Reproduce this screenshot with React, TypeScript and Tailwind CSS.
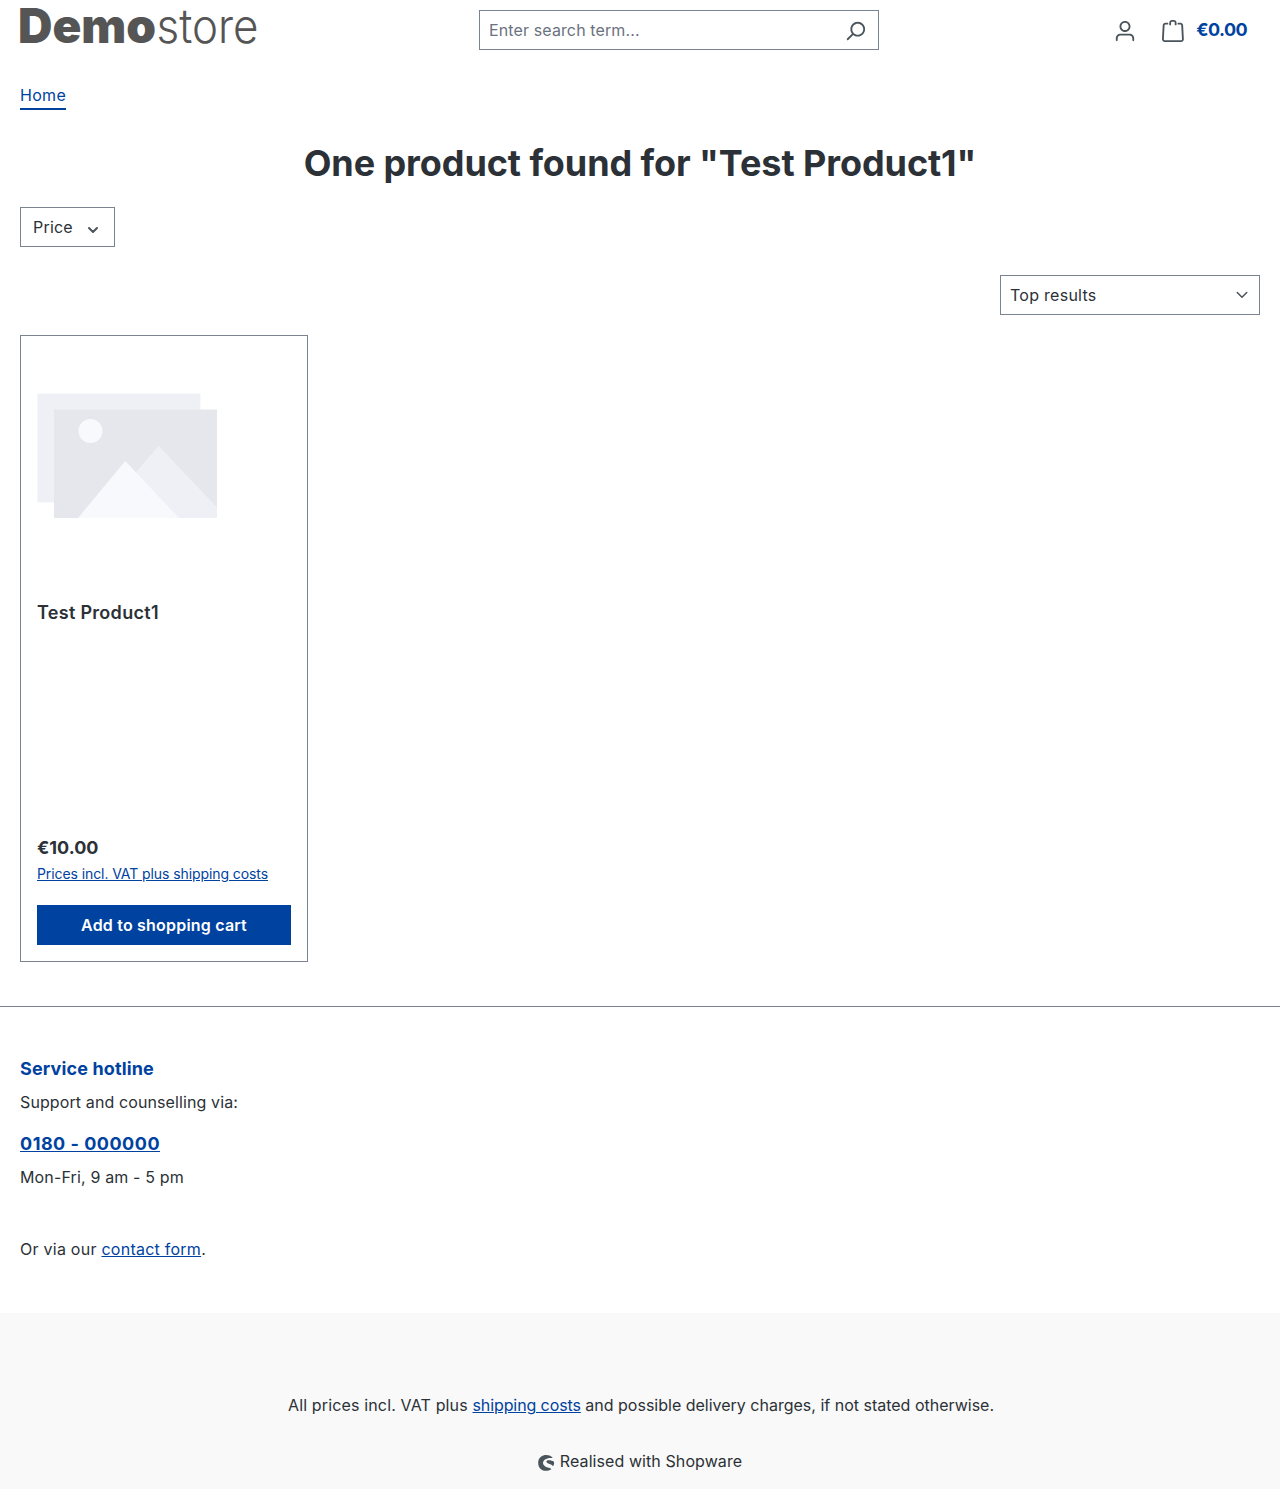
import React from "react";

const iconClass = "shrink-0 fill-[#4a545b]";

function SearchIcon() {
  return (
    <svg viewBox="0 0 24 24" className={`mt-px h-[22px] w-[22px] ${iconClass}`}>
      <path d="M10.0944 16.3199 4.707 21.707c-.3905.3905-1.0237.3905-1.4142 0-.3905-.3905-.3905-1.0237 0-1.4142L8.68 14.9056C7.6271 13.551 7 11.8487 7 10c0-4.4183 3.5817-8 8-8s8 3.5817 8 8-3.5817 8-8 8c-1.8487 0-3.551-.627-4.9056-1.6801zM15 16c3.3137 0 6-2.6863 6-6s-2.6863-6-6-6-6 2.6863-6 6 2.6863 6 6 6z" />
    </svg>
  );
}

function AvatarIcon() {
  return (
    <svg viewBox="0 0 24 24" className={`h-[22px] w-[22px] ${iconClass}`}>
      <path d="M12 3C9.7909 3 8 4.7909 8 7c0 2.2091 1.7909 4 4 4 2.2091 0 4-1.7909 4-4 0-2.2091-1.7909-4-4-4zm0-2c3.3137 0 6 2.6863 6 6s-2.6863 6-6 6-6-2.6863-6-6 2.6863-6 6-6zM4 22.099c0 .5523-.4477 1-1 1s-1-.4477-1-1V20c0-2.7614 2.2386-5 5-5h10.0007c2.7614 0 5 2.2386 5 5v2.099c0 .5523-.4477 1-1 1s-1-.4477-1-1V20c0-1.6569-1.3431-3-3-3H7c-1.6569 0-3 1.3431-3 3v2.099z" />
    </svg>
  );
}

function BagIcon() {
  return (
    <svg viewBox="0 0 24 24" className={`h-[22px] w-[22px] ${iconClass}`}>
      <path d="M5.892 3c.5523 0 1 .4477 1 1s-.4477 1-1 1H3.7895a1 1 0 0 0-.9986.9475l-.7895 15c-.029.5515.3946 1.0221.9987 1.0525h17.8102c.5523 0 1-.4477.9986-1.0525l-.7895-15A1 1 0 0 0 20.0208 5H17.892c-.5523 0-1-.4477-1-1s.4477-1 1-1h2.1288c1.5956 0 2.912 1.249 2.9959 2.8423l.7894 15c.0035.0788.0035.0788.0042.1577 0 1.6569-1.3432 3-3 3H3c-.079-.0007-.079-.0007-.1577-.0041-1.6546-.0871-2.9253-1.499-2.8382-3.1536l.7895-15C.8775 4.249 2.1939 3 3.7895 3H5.892zm4 2c0 .5523-.4477 1-1 1s-1-.4477-1-1V3c0-1.6569 1.3432-3 3-3h2c1.6569 0 3 1.3431 3 3v2c0 .5523-.4477 1-1 1s-1-.4477-1-1V3c0-.5523-.4477-1-1-1h-2c-.5523 0-1 .4477-1 1v2z" />
    </svg>
  );
}

function Logo() {
  return (
    <svg viewBox="0 0 240 40" className="h-10 w-60 overflow-visible fill-[#555555]" fontFamily="Inter, sans-serif" fontSize="47.5">
      <text x="-2" y="34.700" fontWeight="900" textLength="138" lengthAdjust="spacingAndGlyphs">Demo</text>
      <text x="136.500" y="34.700" fontWeight="300" textLength="102" lengthAdjust="spacingAndGlyphs">store</text>
    </svg>
  );
}

function PlaceholderImage() {
  return (
    <svg viewBox="0 0 180 126" className="mt-[41px] h-[126px] w-[180px]">
      <path fill="#eff0f6" d="M.4.7h163v108.500H.4z" />
      <path fill="#e6e7ec" d="M17 16.500h163V125H17z" />
      <path fill="#eff0f6" d="m99 79 22.700-26.300L180 114.500V125H90z" />
      <path fill="#f8f9fd" d="m88.300 68 53.700 57H41z" />
      <circle cx="53.500" cy="38" r="12" fill="#f8f9fd" />
    </svg>
  );
}

export default function App() {
  return (
    <div className="h-[1489px] bg-white font-[Inter,sans-serif] text-base leading-6 text-[#2b3136]">
      <header className="flex h-[60px] items-start px-5">
        <div className="mt-2 w-[459px]"><Logo /></div>
        <div className="mt-2.5 flex h-10 w-[400px] items-center border border-[#798490] pl-[9px] pr-3">
          <span className="flex-1 tracking-[0.12px] text-[#6b7280]">Enter search term...</span>
          <SearchIcon />
        </div>
        <div className="ml-auto mr-[13px] mt-5 flex h-[22px] items-center">
          <AvatarIcon />
          <span className="ml-[26px] flex"><BagIcon /></span>
          <span className="-mt-0.5 ml-3 text-lg font-bold leading-5 tracking-[-0.6px] text-[#0042a0]">€0.00</span>
        </div>
      </header>

      <nav className="mt-6 flex h-[26px] px-5">
        <a className="h-[26px] border-b-2 border-[#0042a0] leading-[23px] tracking-[0.3px] text-[#0042a0]">Home</a>
      </nav>

      <main className="px-5">
        <h1 className="mt-8 text-center text-4xl font-bold leading-[43px] tracking-[-0.08px]">One product found for "Test Product1"</h1>
        <div className="mt-[22px] flex h-10 w-[95px] items-center justify-between border border-[#798490] pl-3 pr-[15px]">
          <span className="tracking-[0.2px]">Price</span>
          <svg viewBox="0 0 12 8" className="mt-[5px] h-2 w-3 fill-none stroke-[#4a545b]">
            <path d="m2 2 4 4 4-4" strokeWidth="2" strokeLinecap="round" strokeLinejoin="round" />
          </svg>
        </div>
        <div className="ml-auto mt-7 flex h-10 w-[260px] items-center justify-between border border-[#798490] pl-[9px] pr-[11px]">
          <span className="tracking-[0.27px]">Top results</span>
          <svg viewBox="0 0 12 8" className="h-2 w-3 fill-none stroke-[#4a545b]">
            <path d="m1.250 1.500 4.750 4.750 4.750-4.750" strokeWidth="1.500" strokeLinecap="round" strokeLinejoin="round" />
          </svg>
        </div>

        <article className="mt-5 flex h-[627px] w-72 flex-col border border-[#798490] p-4">
          <PlaceholderImage />
          <h2 className="mt-[82px] text-lg font-semibold leading-6 tracking-[0.3px]">Test Product1</h2>
          <p className="mt-auto text-lg font-bold leading-6">€10.00</p>
          <a className="mt-1 self-start text-sm leading-5 tracking-[-0.085px] text-[#0042a0] underline">Prices incl. VAT plus shipping costs</a>
          <button className="mt-[21px] h-10 w-full bg-[#0042a0] font-semibold tracking-[0.2px] text-white">Add to shopping cart</button>
        </article>
      </main>

      <footer className="mt-11 border-t border-[#798490]">
        <section className="h-[306px] px-5 pt-[50px]">
          <h3 className="text-lg font-bold leading-6 tracking-[0.13px] text-[#0042a0]">Service hotline</h3>
          <p className="mt-[9px] tracking-[0.11px]">Support and counselling via:</p>
          <a className="mt-[18px] block text-lg font-bold leading-6 tracking-[0.5px] text-[#0042a0] underline">0180 - 000000</a>
          <p className="mt-[9px] tracking-[0.15px]">Mon-Fri, 9 am - 5 pm</p>
          <p className="mt-12 tracking-[0.25px]">Or via our <a className="text-[#0042a0] underline">contact form</a>.</p>
        </section>
        <section className="h-[176px] bg-[#f9f9f9] pt-20 text-center">
          <p className="pl-0.5">
            <span className="tracking-[0.15px]">All prices incl. VAT plus </span>
            <a className="tracking-[-0.1px] text-[#0042a0] underline">shipping costs</a> and possible delivery charges, if not stated otherwise.
          </p>
          <div className="mt-8 flex justify-center gap-[5px]">
            <svg viewBox="0 0 18 18" className="mt-[5px] h-[18px] w-[17px] fill-[#4a545b]">
              <path d="M15 2.900C10.500-1.400.2.300.2 8.900c0 8 8.400 10.400 13.700 6.800.3-.2.200-.5-.1-.7-2.100-1-8.500-1.800-8.500-5.900 0-3.400 4.300-5.500 9.700-5.300.4 0 .4-.5 0-.9z" />
              <path d="M16.800 7.700c-2.100-1.700-7.900-2.300-7.900-.2 0 2.400 4.900 2.200 6.500 4.400.2.300.5.200.8-.1.900-1.200 1.100-2.600.6-4.100z" />
            </svg>
            <span className="tracking-[0.08px]">Realised with Shopware</span>
          </div>
        </section>
      </footer>
    </div>
  );
}
